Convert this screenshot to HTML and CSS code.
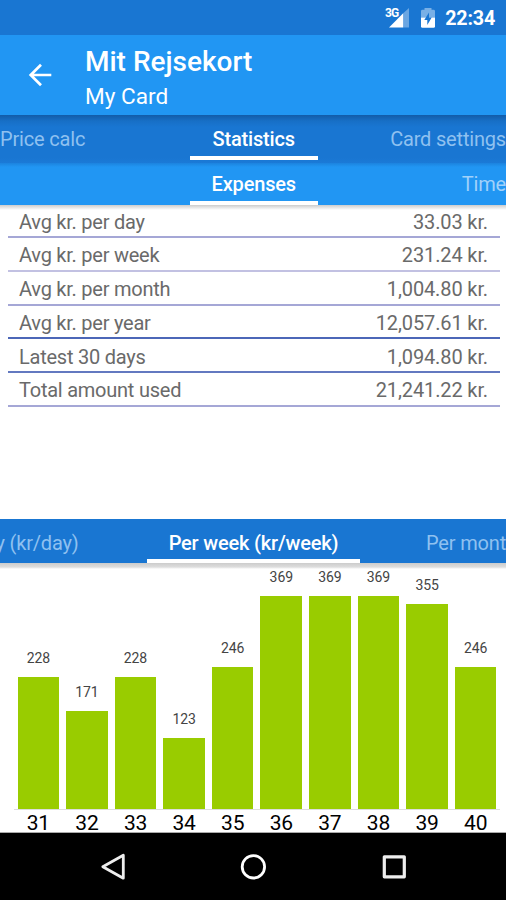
FILE: index.html
```html
<!DOCTYPE html>
<html lang="da">
<head>
<meta charset="utf-8">
<title>Mit Rejsekort</title>
<link rel="stylesheet" href="styles.css">
</head>
<body>
<div class="screen">
  <div class="status">
    <svg class="signal" width="26" height="22" viewBox="0 0 26 22">
      <path d="M19.200 6.300 25 1v19.500h-5.800z" fill="#6aa6e2"/>
      <path d="M5 20.500 19.200 6.300V20.500z" fill="#fff"/>
    </svg>
    <span class="net">3G</span>
    <svg class="battery" width="16" height="22" viewBox="0 0 16 22">
      <path d="M1 10.500V4.200Q1 2.800 2.500 2.800H4.500V1h7v1.800h2Q15 2.800 15 4.200V10.500z" fill="#79b0e6"/>
      <path d="M1 10.500h14v9q0 1.300-1.400 1.300H2.400Q1 20.800 1 19.500z" fill="#fff"/>
      <path d="M9 5.500 4.300 13H7.300v5L11.700 10.500H9z" fill="#1976d2"/>
    </svg>
    <span class="clock">22:34</span>
  </div>
  <header class="appbar">
    <svg class="back" width="24" height="24" viewBox="0 0 24 24" fill="none" stroke="#fff" stroke-width="2.700"><path d="M23.300 12H3M13 1.700 2.700 12 13 22.300"/></svg>
    <div class="titles">
      <h1>Mit Rejsekort</h1>
      <p>My Card</p>
    </div>
  </header>
  <nav class="tabs main">
    <span class="tab prev">Price calc</span>
    <span class="tab active">Statistics</span>
    <span class="tab next">Card settings</span>
  </nav>
  <nav class="tabs sub">
    <span class="tab prev"></span>
    <span class="tab active">Expenses</span>
    <span class="tab next">Time</span>
  </nav>
  <dl class="stats">
    <div class="row"><dt>Avg kr. per day</dt><dd>33.03 kr.</dd></div>
    <div class="row pale"><dt>Avg kr. per week</dt><dd>231.24 kr.</dd></div>
    <div class="row"><dt>Avg kr. per month</dt><dd>1,004.80 kr.</dd></div>
    <div class="row strong"><dt>Avg kr. per year</dt><dd>12,057.61 kr.</dd></div>
    <div class="row mid"><dt>Latest 30 days</dt><dd>1,094.80 kr.</dd></div>
    <div class="row"><dt>Total amount used</dt><dd>21,241.22 kr.</dd></div>
  </dl>
  <nav class="tabs period">
    <span class="tab prev">y (kr/day)</span>
    <span class="tab active">Per week (kr/week)</span>
    <span class="tab next">Per mont</span>
  </nav>
  <section class="chart">
    <div class="bars">
      <div class="col"><span class="val">228</span><div class="bar" style="height:132px"></div></div>
      <div class="col"><span class="val">171</span><div class="bar" style="height:98.500px"></div></div>
      <div class="col"><span class="val">228</span><div class="bar" style="height:132px"></div></div>
      <div class="col"><span class="val">123</span><div class="bar" style="height:71px"></div></div>
      <div class="col"><span class="val">246</span><div class="bar" style="height:142.300px"></div></div>
      <div class="col"><span class="val">369</span><div class="bar" style="height:213px"></div></div>
      <div class="col"><span class="val">369</span><div class="bar" style="height:213px"></div></div>
      <div class="col"><span class="val">369</span><div class="bar" style="height:213px"></div></div>
      <div class="col"><span class="val">355</span><div class="bar" style="height:205px"></div></div>
      <div class="col"><span class="val">246</span><div class="bar" style="height:142.300px"></div></div>
    </div>
    <div class="weeks">
      <span>31</span><span>32</span><span>33</span><span>34</span><span>35</span><span>36</span><span>37</span><span>38</span><span>39</span><span>40</span>
    </div>
  </section>
  <footer class="navbar">
    <svg width="28" height="30" viewBox="0 0 28 30" fill="none" stroke="#eee" stroke-width="2.800" stroke-linejoin="round"><path d="M24.300 3.200V26.200L3.800 14.700z"/></svg>
    <svg width="28" height="30" viewBox="0 0 28 30" fill="none" stroke="#fff" stroke-width="2.800"><circle cx="14.400" cy="14.800" r="11.200"/></svg>
    <svg width="28" height="30" viewBox="0 0 28 30" fill="none" stroke="#eee" stroke-width="3.200" stroke-linejoin="round"><path d="M4.300 4.800h20v20h-20z"/></svg>
  </footer>
</div>
</body>
</html>
```
FILE: styles.css
```css
* { box-sizing: border-box; }
body, h1, p, dl, dd { margin: 0; }
body { font-family: Roboto, "Liberation Sans", sans-serif; background: #fff; }
.screen { width: 506px; height: 900px; display: flex; flex-direction: column; overflow: hidden; }

.status { height: 35px; flex: none; background: #1976d2; color: #fff; display: flex; align-items: center; justify-content: flex-end; padding: 3px 11px 0 0; position: relative; }
.signal { margin: -2px 10px 0 0; }
.net { position: absolute; left: 385px; top: 7px; font-size: 12px; line-height: 13px; font-weight: 700; letter-spacing: -0.8px; }
.battery { margin: -2px 9px 0 0; }
.clock { font-size: 19.700px; line-height: 22px; font-weight: 700; letter-spacing: -0.2px; }

.appbar { height: 79.500px; flex: none; background: #2196f3; color: #fff; display: flex; padding: 0 0 0 28px; }
.back { margin-top: 28px; }
.titles { margin: 11px 0 0 33px; }
.titles h1 { font-size: 28px; line-height: 32px; font-weight: 500; }
.titles p { font-size: 22.600px; line-height: 27px; margin-top: 5px; }

.tabs { flex: none; display: grid; color: #fff; font-size: 20px; letter-spacing: -0.18px; line-height: 24px; white-space: nowrap; }
.main, .sub { grid-template-columns: 189.500px 128.500px 188px; }
.tab { text-align: center; }
.tab.active { font-weight: 500; border-bottom: 4px solid #fff; }
.tab.prev { text-align: left; }
.tab.next { text-align: right; }
.prev, .next { color: #8fc1f0; }
.main { height: 48.500px; background: linear-gradient(#125ca9, #176fc6 6px, #1976d2 12px, #1976d2 43px, #1b7ad7); padding: 12px 0 3.500px; }
.sub { height: 41.500px; background: linear-gradient(#1c83de, #2196f3 4px); padding-top: 9px; }
.sub .next { color: #a0d1fa; }

.stats { height: 314px; flex: none; padding: 0 6px 0 7.500px; background: linear-gradient(#ccc, #fff 5px); color: #6a6a6a; font-size: 20px; line-height: 23px; }
.row { display: flex; justify-content: space-between; height: 33.700px; padding: 6.300px 12px 0 11.500px; border-bottom: 2px solid #a5a7d6; }
.row dt { letter-spacing: -0.24px; }
.row dd { letter-spacing: -0.12px; }
.row.pale { border-color: #c2c1e2; }
.row.strong { border-color: #4c67b8; }
.row.mid { border-color: #6379c0; }

.period { height: 44.500px; grid-template-columns: 147px 213px 146px; background: #1976d2; padding-top: 12px; }
.period .prev { margin-left: -4.500px; }
.chart { height: 270px; flex: none; background: linear-gradient(#ccc, #ddd 4px, #fff 6px); padding: 0 6px 0 14px; border-bottom: 1px solid #aaa; }
.bars { height: 247px; display: flex; border-bottom: 1px solid #ddd; }
.col { width: 48.600px; display: flex; flex-direction: column; justify-content: flex-end; align-items: center; }
.val { font-size: 14px; line-height: 16px; color: #444; margin-bottom: 11px; letter-spacing: -0.1px; }
.bar { width: 41.600px; background: #99cc00; }
.weeks { display: flex; font-size: 21px; line-height: 27px; color: #000; letter-spacing: -0.2px; }
.weeks span { width: 48.600px; text-align: center; }

.navbar { flex: 1; background: #000; display: flex; align-items: center; justify-content: center; gap: 112.500px; }
```
